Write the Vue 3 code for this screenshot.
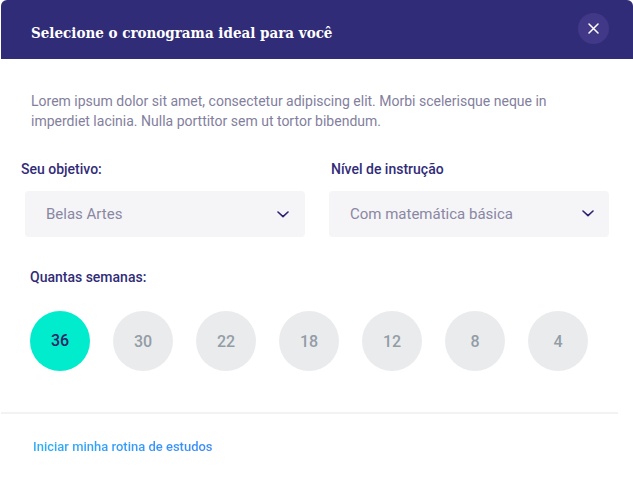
<script setup>
import { ref } from 'vue'

const goal = ref('Belas Artes')
const level = ref('Com matemática básica')
const weeks = ref(36)

const goals = ['Belas Artes', 'Engenharia', 'Medicina']
const levels = ['Com matemática básica', 'Sem matemática básica']
const weekOptions = [36, 30, 22, 18, 12, 8, 4]
</script>

<template>
  <main class="dialog" role="dialog" aria-labelledby="dialog-title">
    <header class="header">
      <h1 id="dialog-title" class="title">Selecione o cronograma ideal para você</h1>
      <button class="close" type="button" aria-label="Fechar">
        <svg width="11" height="11" viewBox="0 0 11 11" fill="none" aria-hidden="true">
          <path d="M1 1L10 10M10 1L1 10" stroke="#fff" stroke-width="1.5" stroke-linecap="round" />
        </svg>
      </button>
    </header>

    <form class="form" @submit.prevent>
      <p class="intro">
        Lorem ipsum dolor sit amet, consectetur adipiscing elit. Morbi scelerisque neque in
        imperdiet lacinia. Nulla porttitor sem ut tortor bibendum.
      </p>

      <div class="fields">
        <div class="field goal">
          <label class="label" for="goal">Seu objetivo:</label>
          <div class="select-box">
            <select id="goal" v-model="goal" class="select">
              <option v-for="item in goals" :key="item">{{ item }}</option>
            </select>
            <svg class="chevron" width="12" height="8" viewBox="0 0 12 8" fill="none" aria-hidden="true">
              <path d="M1 2L6 6.7L11 2" stroke="#2d2370" stroke-width="1.6" stroke-linecap="round" stroke-linejoin="round" />
            </svg>
          </div>
        </div>
        <div class="field level">
          <label class="label" for="level">Nível de instrução</label>
          <div class="select-box">
            <select id="level" v-model="level" class="select">
              <option v-for="item in levels" :key="item">{{ item }}</option>
            </select>
            <svg class="chevron" width="12" height="8" viewBox="0 0 12 8" fill="none" aria-hidden="true">
              <path d="M1 1L6 5.7L11 1" stroke="#2d2370" stroke-width="1.6" stroke-linecap="round" stroke-linejoin="round" />
            </svg>
          </div>
        </div>
      </div>

      <fieldset class="weeks">
        <legend class="label">Quantas semanas:</legend>
        <div class="week-list">
          <label v-for="n in weekOptions" :key="n" class="week" :class="{ selected: weeks === n }">
            <input v-model="weeks" class="radio" type="radio" name="weeks" :value="n" />
            {{ n }}
          </label>
        </div>
      </fieldset>
    </form>

    <footer class="footer">
      <a class="start" href="#">Iniciar minha rotina de estudos</a>
    </footer>
  </main>
</template>

<style>
body {
  margin: 0;
  background: #fff;
}
</style>

<style scoped>
.dialog {
  font-family: Roboto, sans-serif;
  padding-left: 1px;
}
.header {
  display: flex;
  align-items: center;
  justify-content: space-between;
  box-sizing: border-box;
  min-height: 59px;
  padding: 0 24px 2px 30px;
  background: #312c78;
  border-radius: 6px 6px 0 0;
}
.title {
  margin: 0;
  padding-top: 8px;
  color: #fff;
  font: 700 15px/20px "Roboto Slab", "DejaVu Serif Condensed", "DejaVu Serif", serif;
}
.close {
  display: flex;
  align-items: center;
  justify-content: center;
  flex: none;
  width: 31px;
  height: 31px;
  padding: 0;
  border: 0;
  border-radius: 50%;
  background: #413888;
  cursor: pointer;
}
.intro {
  margin: 0;
  padding: 32px 60px 0 30px;
  color: #83809d;
  font-size: 14px;
  line-height: 20px;
}
.fields {
  display: grid;
  grid-template-columns: 1fr 1fr;
  gap: 24px;
  padding: 28px 24px 0;
}
.label {
  display: block;
  padding: 0;
  color: #312c78;
  font-size: 14px;
  font-weight: 500;
  line-height: 20px;
}
.goal .label {
  margin-left: -4px;
}
.level .label {
  margin-left: 2px;
}
.select-box {
  display: grid;
  align-items: center;
  margin-top: 12px;
}
.select,
.chevron {
  grid-area: 1 / 1;
}
.select {
  appearance: none;
  width: 100%;
  height: 46px;
  padding: 0 40px 0 21px;
  border: 0;
  border-radius: 4px;
  background: #f5f5f8;
  color: #8a87a2;
  font: 400 15px/20px Roboto, sans-serif;
}
.chevron {
  justify-self: end;
  margin-right: 16px;
  pointer-events: none;
}
.level .chevron {
  margin-right: 15px;
}
.weeks {
  min-width: 0;
  margin: 0;
  padding: 0 29px;
  border: 0;
}
.weeks .label {
  padding-top: 30px;
}
.week-list {
  display: flex;
  gap: 23px;
  padding-top: 24px;
}
.week {
  position: relative;
  display: flex;
  align-items: center;
  justify-content: center;
  box-sizing: border-box;
  width: 60px;
  height: 60px;
  padding-top: 2px;
  border-radius: 50%;
  background: #eaebed;
  color: #929da6;
  font-size: 16px;
  font-weight: 500;
  line-height: 20px;
  cursor: pointer;
}
.week.selected {
  padding-top: 0;
  background: #00eccd;
  color: #2b2467;
}
.radio {
  position: absolute;
  inset: 0;
  margin: 0;
  opacity: 0;
  cursor: pointer;
}
.week:focus-within {
  outline: 2px solid #312c78;
}
.footer {
  margin: 41px 15px 0 0;
  padding: 22px 32px;
  border-top: 2px solid #f2f2f3;
}
.start {
  display: inline-block;
  background: linear-gradient(90deg, #2fadf8, #3d8af7);
  background-clip: text;
  color: transparent;
  font-size: 13px;
  font-weight: 500;
  line-height: 20px;
  text-decoration: none;
}
</style>
